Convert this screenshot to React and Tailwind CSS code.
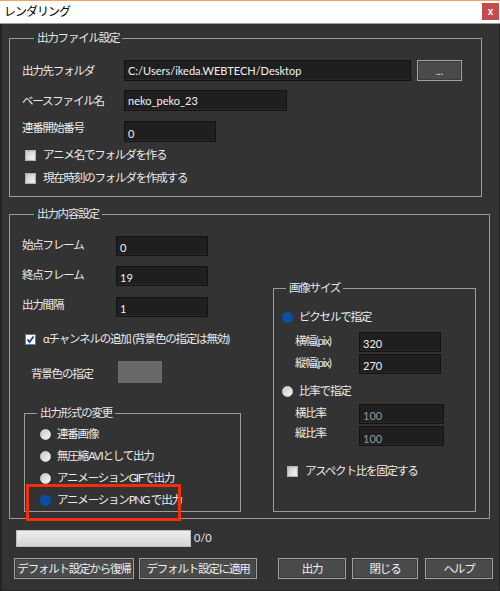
import React from "react";

function Group({ title, className = "", children }) {
  return (
    <fieldset className={`border border-[#9c9c9c] min-w-0 ${className}`}>
      <legend className="ml-[12px] px-[3px] leading-[14px] text-[#e8e8e8]">{title}</legend>
      {children}
    </fieldset>
  );
}

function Input({ value, className = "", dim = false }) {
  return (
    <div className={`h-[20px] bg-[#1f1f1f] border border-[#121212] shadow-[inset_0_-1px_0_#2a2a2a] flex items-center pl-[3px] text-[11px] tracking-normal leading-none ${dim ? "text-[#9a9a9a]" : "text-[#f2f2f2]"} ${className}`}>
      {value}
    </div>
  );
}

function Check({ checked }) {
  if (checked) {
    return (
      <div className="w-[11px] h-[11px] border border-[#4a86c0] bg-white flex items-center justify-center shrink-0">
        <svg width="9" height="9" viewBox="0 0 9 9">
          <path d="M1.5 4.5 L3.5 7 L7.5 1.5" stroke="#1c3f9c" strokeWidth="1.8" fill="none" />
        </svg>
      </div>
    );
  }
  return (
    <div className="w-[11px] h-[11px] border border-[#b4b4b4] bg-linear-to-br from-[#bcbcbc] to-[#eeeeee] shrink-0 flex items-center justify-center">
      <div className="w-[7px] h-[7px] bg-linear-to-br from-[#cfcfcf] to-[#f4f4f4]" />
    </div>
  );
}

function Radio({ checked }) {
  if (checked) {
    return <div className="w-[11px] h-[11px] rounded-full bg-[#0a4fa5] shrink-0" />;
  }
  return <div className="w-[11px] h-[11px] rounded-full bg-linear-to-br from-[#c8c8c8] to-[#f8f8f8] border border-[#d8d8d8] shrink-0" />;
}

function Btn({ children, className = "" }) {
  return (
    <div className={`h-[21px] border border-[#a2a2a2] bg-[#4a4a4a] shadow-[inset_0_0_0_1px_#3c3c3c] flex items-center justify-center leading-none text-[#f0f0f0] whitespace-nowrap ${className}`}>
      {children}
    </div>
  );
}

export default function App() {
  return (
    <div className="w-[500px] h-[591px] flex flex-col font-['Lato','Noto_Sans_CJK_JP',sans-serif] text-[11.5px] tracking-[-1.2px] text-[#ebebeb] overflow-hidden">
      {/* title bar */}
      <div className="h-[24px] shrink-0 bg-white border-t border-t-[#f0a45c] border-b border-b-[#9c9c9c] flex items-start justify-between">
        <div className="pl-[4px] pt-[3px] text-[12px] leading-[16px] tracking-[-1px] text-black">レンダリング</div>
        <div className="mt-[2px] mr-[1px] w-[17px] h-[17px] bg-[#c64c4c] flex items-center justify-center text-white text-[10px] font-bold leading-none tracking-normal font-['Liberation_Sans',sans-serif]">x</div>
      </div>

      {/* body */}
      <div className="relative flex-1 bg-[#333333] border-l-2 border-r border-b border-[#242424] pl-[7px]">
        {/* group 1 */}
        <Group title="出力ファイル設定" className="mt-[7px] w-[473px] pl-[12px] pb-[10px]">
          <div className="mt-[15px] h-[21px] flex items-center">
            <div className="w-[102px]">出力先フォルダ</div>
            <Input value="C:/Users/ikeda.WEBTECH/Desktop" className="w-[287px] h-[21px]" />
            <Btn className="ml-[6px] w-[45px] h-[21px] !items-end pb-[4px]"><span className="text-[10px] leading-none tracking-normal">...</span></Btn>
          </div>
          <div className="mt-[9px] h-[21px] flex items-center">
            <div className="w-[102px]">ベースファイル名</div>
            <Input value="neko_peko_23" className="w-[163px] h-[21px]" />
          </div>
          <div className="mt-[10px] h-[21px] flex items-center">
            <div className="w-[102px] -mt-[8px]">連番開始番号</div>
            <Input value="0" className="w-[92px] h-[21px] pt-[3px]" />
          </div>
          <div className="mt-[5px] h-[16px] flex items-center ml-[3px]">
            <Check />
            <span className="ml-[7px]">アニメ名でフォルダを作る</span>
          </div>
          <div className="mt-[7px] h-[16px] flex items-center ml-[3px]">
            <Check />
            <span className="ml-[7px]">現在時刻のフォルダを作成する</span>
          </div>
        </Group>

        {/* group 2 */}
        <Group title="出力内容設定" className="mt-[10px] w-[481px] pl-[12px] pb-[6px]">
          <div className="flex items-end">
            <div className="w-[218px] flex flex-col">
              <div className="mt-[15px] h-[20px] flex items-center">
                <div className="w-[94px] -mt-[2px]">始点フレーム</div>
                <Input value="0" className="w-[92px] pt-[2px]" />
              </div>
              <div className="mt-[10px] h-[20px] flex items-center">
                <div className="w-[94px] -mt-[2px]">終点フレーム</div>
                <Input value="19" className="w-[92px] pt-[2px]" />
              </div>
              <div className="mt-[11px] h-[20px] flex items-center">
                <div className="w-[94px] -mt-[5px]">出力間隔</div>
                <Input value="1" className="w-[92px] pt-[3px]" />
              </div>
              <div className="mt-[14px] h-[16px] flex items-center ml-[3px]">
                <Check checked />
                <span className="ml-[7px] whitespace-nowrap">αチャンネルの追加 (背景色の指定は無効)</span>
              </div>
              <div className="mt-[14px] h-[22px] flex items-center">
                <div className="ml-[9px] w-[87px] pt-[4px]">背景色の指定</div>
                <div className="w-[44px] h-[22px] bg-[#696969]" />
              </div>
              <Group title="出力形式の変更" className="mt-[23px] ml-[2px] w-[217px]">
                <div className="mt-[3px] flex flex-col">
                  {[
                    ["連番画像", false],
                    ["無圧縮AVIとして出力", false],
                    ["アニメーションGIFで出力", false],
                    ["アニメーションPNG で出力", true],
                  ].map(([t, c]) => (
                    <div key={t} className="h-[22px] flex items-center pl-[15px]">
                      <Radio checked={c} />
                      <span className="ml-[6px] whitespace-nowrap">{t}</span>
                    </div>
                  ))}
                </div>
              </Group>
            </div>

            <Group title="画像サイズ" className="ml-[33px] w-[203px] pb-[32px]">
              <div className="mt-[14px] h-[16px] flex items-center pl-[8px]">
                <Radio checked />
                <span className="ml-[6px]">ピクセルで指定</span>
              </div>
              <div className="mt-[7px] h-[20px] flex items-center pl-[21px]">
                <div className="w-[64px] -mt-[2px]">横幅(pix)</div>
                <Input value="320" className="w-[82px] pt-[2px]" />
              </div>
              <div className="mt-[2px] h-[20px] flex items-center pl-[21px]">
                <div className="w-[64px] -mt-[2px]">縦幅(pix)</div>
                <Input value="270" className="w-[82px] pt-[2px]" />
              </div>
              <div className="mt-[9px] h-[16px] flex items-center pl-[8px]">
                <Radio />
                <span className="ml-[6px]">比率で指定</span>
              </div>
              <div className="mt-[5px] h-[20px] flex items-center pl-[21px]">
                <div className="w-[64px] -mt-[3px]">横比率</div>
                <Input value="100" dim className="w-[85px] pt-[2px]" />
              </div>
              <div className="mt-[2px] h-[20px] flex items-center pl-[21px]">
                <div className="w-[64px] -mt-[6px]">縦比率</div>
                <Input value="100" dim className="w-[85px] pt-[4px]" />
              </div>
              <div className="mt-[17px] h-[16px] flex items-center pl-[13px]">
                <Check />
                <span className="ml-[7px]">アスペクト比を固定する</span>
              </div>
            </Group>
          </div>
        </Group>

        {/* progress */}
        <div className="mt-[11px] ml-[7px] h-[17px] flex items-center">
          <div className="w-[175px] h-[17px] border border-[#bdbdbd] bg-linear-to-b from-[#eeeeee] to-[#d4d4d4]" />
          <span className="ml-[3px] text-[11px] tracking-normal text-[#e8e8e8]">0/0</span>
        </div>

        {/* buttons */}
        <div className="mt-[11px] ml-[5px] flex items-center">
          <Btn className="w-[120px]">デフォルト設定から復帰</Btn>
          <Btn className="ml-[5px] w-[118px]">デフォルト設定に適用</Btn>
          <Btn className="ml-[21px] w-[68px]">出力</Btn>
          <Btn className="ml-[6px] w-[66px]">閉じる</Btn>
          <Btn className="ml-[7px] w-[68px]">ヘルプ</Btn>
        </div>

        {/* red highlight annotation */}
        <div className="absolute left-[24px] top-[460px] w-[155px] h-[37px] border-[3px] border-[#f0300c]" />
      </div>
    </div>
  );
}
